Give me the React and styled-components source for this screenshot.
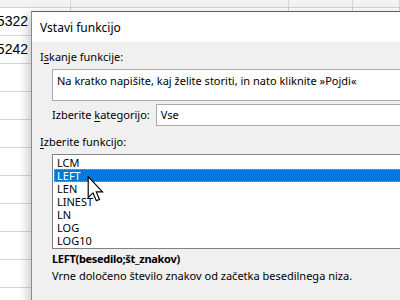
import React from "react";
import styled, { createGlobalStyle } from "styled-components";

const Global = createGlobalStyle`
  *, *::before, *::after { box-sizing: border-box; }
  html, body { margin: 0; padding: 0; background: #fff; }
  #root { width: 400px; height: 300px; }
`;

const Screen = styled.div`
  position: relative;
  width: 400px;
  height: 300px;
  overflow: hidden;
  background: #fff;
`;

const Sheet = styled.div`
  display: flex;
  flex-direction: column;
`;

const HeadRow = styled.div`
  height: 8px;
  background: #f3f3f3;
  border-bottom: 1px solid #d4d4d4;
  display: grid;
  grid-template-columns: 71px 218px 64px 1fr;
`;

const Row = styled.div`
  height: 28px;
  border-bottom: 1px solid #d4d4d4;
  display: grid;
  grid-template-columns: 71px 218px 64px 1fr;
`;

const Cell = styled.div`
  border-right: 1px solid #d4d4d4;
  font-family: "Liberation Sans", Arial, sans-serif;
  font-size: 14px;
  line-height: 27px;
  color: #000;
  display: flex;
  justify-content: flex-end;
  padding-right: ${(p) => p.$padRight || 0}px;
  white-space: nowrap;
  overflow: hidden;
`;

const Dialog = styled.div`
  position: absolute;
  left: 31px;
  top: 11px;
  width: 420px;
  height: 320px;
  display: flex;
  flex-direction: column;
  background: #f0f0f0;
  border-top: 1px solid #2b6cb0;
  border-left: 1px solid #8a8a8a;
  box-shadow: -3px 3px 10px rgba(0, 0, 0, 0.22);
  font-family: "Noto Sans", "Open Sans", sans-serif;
  font-size: 11px;
  color: #000;
`;

const TitleBar = styled.div`
  height: 30px;
  background: #fff;
  display: flex;
  align-items: center;
  padding-left: 8px;
  font-size: 12px;
`;

const Body = styled.div`
  display: flex;
  flex-direction: column;
  padding: 7px 0 0 8px;
`;

const Label = styled.div`
  line-height: 16px;
  height: 16px;
  white-space: nowrap;
  margin-left: ${(p) => p.$indent || 0}px;
  margin-top: ${(p) => p.$mt || 0}px;
  font-weight: ${(p) => (p.$bold ? 700 : 400)};
  letter-spacing: ${(p) => (p.$bold ? "-0.3px" : "0")};
`;

const Acc = styled.span`
  text-decoration: underline;
  text-underline-offset: 2px;
`;

const TextBox = styled.div`
  margin: 4px 0 0 12px;
  height: 32px;
  background: #fff;
  border: 1px solid #a9a9a9;
  padding: 3px 4px;
  line-height: 16px;
  white-space: nowrap;
`;

const CatRow = styled.div`
  display: flex;
  align-items: center;
  margin: 3px 0 0 12px;
  gap: 6px;
`;

const Select = styled.div`
  flex: 1;
  height: 22px;
  background: #fff;
  border: 1px solid #a9a9a9;
  padding-left: 4px;
  line-height: 20px;
`;

const ListBox = styled.div`
  margin: 4px 0 0 12px;
  height: 95px;
  background: #fff;
  border: 1px solid #828282;
  padding: 1px 0 0 1px;
  display: flex;
  flex-direction: column;
`;

const Item = styled.div`
  flex: none;
  height: 13px;
  line-height: 13px;
  padding-left: 3px;
  white-space: nowrap;
  background: ${(p) => (p.$sel ? "#0078d7" : "transparent")};
  color: ${(p) => (p.$sel ? "#fff" : "#000")};
  outline: ${(p) => (p.$sel ? "1px dotted #f0902a" : "none")};
  outline-offset: -1px;
`;

const Cursor = styled.svg`
  position: absolute;
  left: 87px;
  top: 176px;
`;

const items = ["LCM", "LEFT", "LEN", "LINEST", "LN", "LOG", "LOG10"];

const values = ["5322", "5242"];

export default function App() {
  return (
    <Screen>
      <Global />
      <Sheet>
        <HeadRow>
          <Cell />
          <Cell />
          <Cell />
          <Cell />
        </HeadRow>
        {Array.from({ length: 11 }).map((_, i) => (
          <Row key={i}>
            <Cell $padRight={42}>{values[i] || ""}</Cell>
            <Cell />
            <Cell />
            <Cell />
          </Row>
        ))}
      </Sheet>
      <Dialog>
        <TitleBar>Vstavi funkcijo</TitleBar>
        <Body>
          <Label>
            I<Acc>s</Acc>kanje funkcije:
          </Label>
          <TextBox>Na kratko napišite, kaj želite storiti, in nato kliknite »Pojdi«</TextBox>
          <CatRow>
            <Label>
              Izberite <Acc>k</Acc>ategorijo:
            </Label>
            <Select>Vse</Select>
          </CatRow>
          <Label $mt={8}>
            <Acc>I</Acc>zberite funkcijo:
          </Label>
          <ListBox>
            {items.map((it) => (
              <Item key={it} $sel={it === "LEFT"}>
                {it}
              </Item>
            ))}
          </ListBox>
          <Label $indent={12} $mt={2} $bold>
            LEFT(besedilo;št_znakov)
          </Label>
          <Label $indent={12} $mt={1}>
            Vrne določeno število znakov od začetka besedilnega niza.
          </Label>
        </Body>
      </Dialog>
      <Cursor width="18" height="26" viewBox="0 0 13 20">
        <path
          d="M0.5 0.5 L0.5 16.5 L4.2 13 L6.8 19 L9.2 18 L6.7 12.2 L11.5 12.2 Z"
          fill="#fff"
          stroke="#000"
          strokeWidth="0.9"
          strokeLinejoin="miter"
        />
      </Cursor>
    </Screen>
  );
}
